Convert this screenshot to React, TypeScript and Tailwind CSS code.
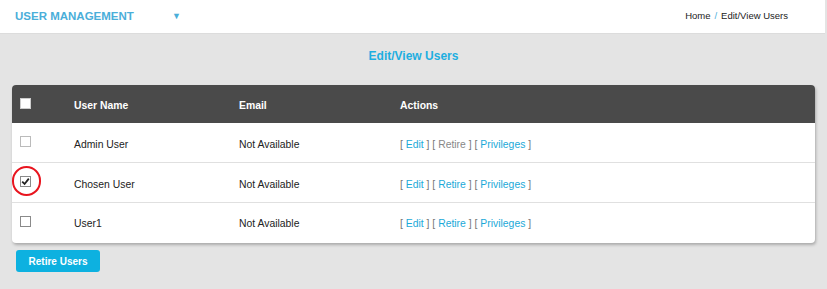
import React from "react";

const font = { fontFamily: '"Liberation Sans", Arial, sans-serif' };

function Box({ checked = false, dark = false }: { checked?: boolean; dark?: boolean }) {
  if (dark) {
    return <div className="w-[11px] h-[11px] bg-white border border-[#ccc]" />;
  }
  return (
    <div className="w-[11px] h-[11px] bg-white border border-[#8a8a8a] flex items-center justify-center">
      {checked && (
        <svg width="9" height="9" viewBox="0 0 9 9">
          <path d="M1.2 4.6 L3.6 7 L7.8 1.6" fill="none" stroke="#222" strokeWidth="1.8" />
        </svg>
      )}
    </div>
  );
}

function Actions({ retireActive }: { retireActive: boolean }) {
  return (
    <span className="text-[#777]">
      [ <span className="text-[#1ba9d8]">Edit</span> ] [{" "}
      <span className={retireActive ? "text-[#1ba9d8]" : "text-[#888]"}>Retire</span> ] [{" "}
      <span className="text-[#1ba9d8]">Privileges</span> ]
    </span>
  );
}

const rows = [
  { name: "Admin User", email: "Not Available", checked: false, retire: false, light: true, pt: "pt-[4px]" },
  { name: "Chosen User", email: "Not Available", checked: true, retire: true, light: false, pt: "pt-[4px]" },
  { name: "User1", email: "Not Available", checked: false, retire: true, light: false, pt: "pt-[2px]" },
];

export default function App() {
  return (
    <div className="w-[827px] h-[289px] bg-[#e4e4e4] overflow-hidden text-[10.4px]" style={font}>
      <div className="w-[825px] h-[34px] bg-white border-b border-[#dcdcdc] flex items-center justify-between pl-[15px] pr-[37px]">
        <div className="flex items-center">
          <span className="text-[#4aaed9] font-bold text-[11.5px] w-[157px]">USER MANAGEMENT</span>
          <span className="text-[#4aaed9] text-[9px]">▼</span>
        </div>
        <div className="text-[#222] text-[9.5px] flex items-center gap-[4px]">
          <span>Home</span>
          <span className="text-[#4aaed9]">/</span>
          <span>Edit/View Users</span>
        </div>
      </div>

      <div className="h-[43px] flex items-center justify-center pt-[1px]">
        <span className="text-[#1eaee0] font-bold text-[12px]">Edit/View Users</span>
      </div>

      <div className="ml-[12px] mt-[8px] w-[803px] bg-white rounded-[4px] shadow-[1px_2px_3px_rgba(0,0,0,0.25)]">
        <div className="h-[38px] bg-[#4a4a4a] rounded-t-[4px] grid grid-cols-[62px_165px_161px_1fr] items-center text-white font-bold pt-[3px]">
          <div className="pl-[8px] pb-[4px]"><Box dark /></div>
          <div>User Name</div>
          <div>Email</div>
          <div>Actions</div>
        </div>
        {rows.map((r, i) => (
          <div
            key={r.name}
            className={`h-[40px] grid grid-cols-[62px_165px_161px_1fr] items-center text-[#222] ${r.pt} ${i < rows.length - 1 ? "border-b border-[#e0e0e0]" : ""}`}
          >
            <div className="pl-[8px] pb-[6px] relative">
              {r.light ? (
                <div className="w-[11px] h-[11px] bg-white border border-[#bbb]" />
              ) : (
                <Box checked={r.checked} />
              )}
              {r.checked && (
                <div className="absolute left-[0px] top-[-10px] w-[29px] h-[30px] rounded-full border-[2.5px] border-[#e8141e]" />
              )}
            </div>
            <div>{r.name}</div>
            <div>{r.email}</div>
            <div><Actions retireActive={r.retire} /></div>
          </div>
        ))}
      </div>

      <div className="ml-[16px] mt-[7px]">
        <button className="w-[84px] h-[22px] bg-[#0db1e0] rounded-[3px] text-white font-bold text-[10px]">
          Retire Users
        </button>
      </div>
    </div>
  );
}
